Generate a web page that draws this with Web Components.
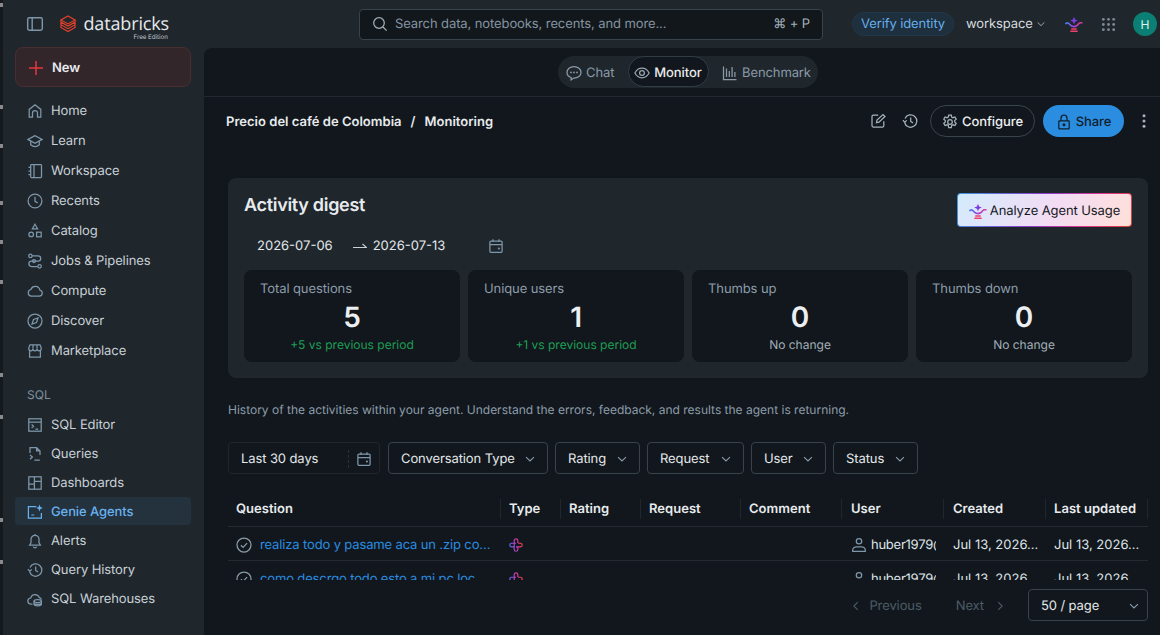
<!DOCTYPE html>
<html lang="en"><head><meta charset="utf-8"><title>Monitoring</title>
<style>
html,body{margin:0;padding:0;height:100%;overflow:hidden;background:#1f272d;font-family:Inter,"Liberation Sans",sans-serif;font-size:13px;color:#dfe4e8;text-rendering:geometricPrecision;letter-spacing:-.1px}
</style></head><body>
<app-shell>
  <top-bar slot="top"></top-bar>
  <side-nav slot="side"></side-nav>
  <main-pane slot="main">
    <seg-tabs></seg-tabs>
    <page-head></page-head>
    <digest-card></digest-card>
    <filter-bar></filter-bar>
    <data-table></data-table>
    <pager-bar></pager-bar>
  </main-pane>
</app-shell>
<script>
const P={
panel:'<rect x="1.5" y="2.5" width="13" height="11" rx="1.5"/><path d="M5.500 2.500v11"/>',
search:'<circle cx="7" cy="7" r="5.300"/><path d="M11 11l3.600 3.600"/>',
home:'<path d="M2.200 14.200V6.400L8 1.800l5.800 4.600v7.800h-3.300V10a2.500 2.500 0 0 0-5 0v4.200z"/>',
learn:'<path d="M8 2.600.9 6.400 8 10.200l7.100-3.800z"/><path d="M3.700 8.200v3.600C5 13 6.500 13.700 8 13.700s3-.7 4.300-1.900V8.200"/>',
workspace:'<rect x="3.700" y="1.500" width="10.800" height="13" rx=".8"/><path d="M7 1.500v13M1.500 4.300h2.200M1.500 8h2.200M1.500 11.700h2.200"/>',
recents:'<circle cx="8" cy="8" r="6.900"/><path d="M8 3.800v4.500l2.700 1.600"/>',
catalog:'<path d="M8 1.200l2.600 4.600H5.400z"/><circle cx="4.200" cy="11.400" r="2.300"/><rect x="9.600" y="9.200" width="4.600" height="4.600"/>',
jobs:'<circle cx="3.400" cy="2.900" r="1.700"/><path d="M5.100 2.900h6a2.600 2.600 0 0 1 0 5.200H4.600a2.700 2.700 0 0 0 0 5.400h6"/><circle cx="12.600" cy="13.300" r="1.700"/><circle cx="7" cy="8.100" r="1.500"/>',
compute:'<path d="M4.300 13.200h7.900a3.100 3.100 0 0 0 .7-6.100 4.700 4.700 0 0 0-9-.6 3.400 3.400 0 0 0 .4 6.700z"/>',
discover:'<circle cx="8" cy="8" r="7"/><path d="M11 5 9.500 9.500 5 11l1.500-4.500z"/>',
market:'<path d="M2.600 7.600v6.600h10.800V7.600"/><path d="M3 1.800h10l1.200 3v1a2.050 2.050 0 0 1-4.100 0 2.100 2.100 0 0 1-4.200 0 2.050 2.050 0 0 1-4.100 0v-1zM6 2v3.500M10 2v3.500"/>',
editor:'<rect x="1.800" y="1.800" width="12.400" height="12.400"/><path d="M1.800 5h12.400M4.600 7.600l2 1.700-2 1.700M8.400 12h2.800"/>',
queries:'<path d="M3 7V1.500h6.600L13 4.900V9M9.600 1.500v3.400H13"/><path d="M3 9l2.400 2L3 13.200M7.400 14h5.400"/>',
dash:'<rect x="1.800" y="1.800" width="12.400" height="12.400"/><path d="M7.400 1.800v12.400M1.800 9h5.600M7.400 6.400h6.800"/>',
genie:'<path d="M14.400 9v5H1.400V2.600h8"/><path fill="currentColor" stroke="none" d="M12.500.6l.9 2.500 2.500.9-2.500.9-.9 2.500-.9-2.500L9.100 4l2.500-.9zM4.300 10.400h3v1.200h-3z"/>',
alerts:'<path d="M2.600 12h10.800l-1.400-2.300V6.300a4 4 0 0 0-8 0v3.400zM6.300 13.600a1.800 1.800 0 0 0 3.400 0M8 1v1.300"/>',
history:'<path d="M2.600 9.500a6.200 6.200 0 1 0 .4-4.100M.9 7.300l1.900 1.900 2-1.800M8.700 4.600v3.900l2.300 1.400"/>',
wh:'<path d="M5.500 13H3.900a3 3 0 0 1-.1-6 4.400 4.400 0 0 1 8.500-.4 3 3 0 0 1 2.200 2"/><ellipse cx="10.700" cy="10" rx="3.700" ry="1.500"/><path d="M7 10v3.300c0 .9 1.700 1.500 3.700 1.500s3.700-.6 3.700-1.500V10M7 12c0 .8 1.700 1.400 3.700 1.400s3.700-.6 3.700-1.400"/>',
down:'<path d="M3.500 5.800 8 10.200l4.500-4.400"/>',
left:'<path d="M10 3.500 5.500 8l4.500 4.500"/>',
right:'<path d="M6 3.500 10.500 8 6 12.500"/>',
chat:'<path d="M8 1.700c3.900 0 7 2.500 7 5.700s-3.100 5.600-7 5.600h-.4l-2.500 1.900v-2.400C2.700 11.700 1 9.700 1 7.400 1 4.200 4.100 1.700 8 1.700z"/><path stroke-width="1.800" stroke-linecap="round" d="M5 7.400h0M8 7.400h0M11 7.400h0"/>',
eye:'<path d="M.9 8C2.500 4.900 5 3.200 8 3.200S13.500 4.900 15.100 8c-1.600 3.100-4.100 4.800-7.100 4.800S2.500 11.100.9 8z"/><circle cx="8" cy="8" r="2.400"/>',
chart:'<path d="M1.500 1.500v13h13M4.500 3.500v8.500M7.300 6v6M10.100 2v10M12.900 7v5"/>',
edit:'<path d="M13.800 8.200v4.600a1.200 1.200 0 0 1-1.200 1.200H3.200A1.200 1.200 0 0 1 2 12.800V3.400a1.200 1.200 0 0 1 1.200-1.200h5"/><path d="M6.500 9.700l.5-2.700 6-5.500 2 2-6 5.700z"/>',
gear:'<circle cx="8" cy="8" r="2.300"/><path d="M6.700 1h2.600l.4 2 1.300.7 1.900-.7 1.300 2.200-1.500 1.300v1.500l1.500 1.300-1.300 2.200-1.900-.7-1.300.7-.4 2H6.700l-.4-2-1.300-.7-1.900.7-1.300-2.200 1.500-1.300V6.500L1.800 5.200l1.300-2.200 1.900.7 1.300-.7z"/>',
lock:'<rect x="2.800" y="6.800" width="10.400" height="8" rx=".6"/><path d="M5 6.800V4.200a3 3 0 0 1 6 0v2.600"/><circle cx="8" cy="10.800" r=".9" fill="currentColor"/>',
cal:'<rect x="1.900" y="3" width="12.200" height="11.300" rx="1"/><path d="M1.900 6.600h12.200M5 1.200V4M11 1.200V4"/><circle cx="10.900" cy="10.500" r="1.100" fill="currentColor" stroke="none"/>',
check:'<circle cx="8" cy="8" r="7"/><path d="M4.900 8.300l2.200 2.100 4-4.300"/>',
user:'<circle cx="8" cy="4.200" r="2.700"/><path d="M1.700 14.300v-1.100c0-2 1.800-3.400 3.800-3.400h5c2 0 3.800 1.400 3.800 3.400v1.100z"/>',
grid:'<g fill="currentColor" stroke="none"><circle cx="2.500" cy="2.500" r="1.500"/><circle cx="8" cy="2.500" r="1.500"/><circle cx="13.500" cy="2.500" r="1.500"/><circle cx="2.500" cy="8" r="1.500"/><circle cx="8" cy="8" r="1.500"/><circle cx="13.500" cy="8" r="1.500"/><circle cx="2.500" cy="13.500" r="1.500"/><circle cx="8" cy="13.500" r="1.500"/><circle cx="13.500" cy="13.500" r="1.500"/></g>',
dots:'<g fill="currentColor" stroke="none"><circle cx="8" cy="2.800" r="1.500"/><circle cx="8" cy="8" r="1.500"/><circle cx="8" cy="13.200" r="1.500"/></g>',
plus:'<path stroke-width="1.500" d="M8 1v14M1 8h14"/>'
};
class XIcon extends HTMLElement{connectedCallback(){
 const s=this.getAttribute('size')||16,n=this.getAttribute('name');
 this.attachShadow({mode:'open'}).innerHTML=`<style>:host{display:inline-flex;flex:none;width:${s}px;height:${s}px;color:var(--icon,#7e97ab)}svg{display:block;width:100%;height:100%;fill:none;stroke:currentColor;stroke-width:1.250}</style><svg viewBox="0 0 16 16">${P[n]||''}</svg>`;
}}
customElements.define('x-icon',XIcon);

let gid=0;
class GenieLamp extends HTMLElement{connectedCallback(){
 const id='g'+(++gid),s=this.getAttribute('size')||20;
 this.attachShadow({mode:'open'}).innerHTML=`<style>:host{display:inline-flex;flex:none;width:${s}px;height:${s}px}svg{width:100%;height:100%;display:block}</style>
 <svg viewBox="0 0 20 20"><defs><linearGradient id="${id}" x1="0" y1="0" x2="1" y2="0"><stop offset="0" stop-color="#3f7ff0"/><stop offset=".5" stop-color="#a83ee0"/><stop offset="1" stop-color="#e0389a"/></linearGradient></defs>
 <path fill="#7d3ce6" d="M10 2l1.200 3 3 1.200-3 1.200-1.200 3-1.200-3-3-1.200 3-1.200z"/>
 <path fill="none" stroke="url(#${id})" stroke-width="1.800" stroke-linecap="round" d="M1 9.500c1.600-1.500 3-.5 4 .8s1.700 2.600 4.800 2.600c3.300 0 4.700-2 5.700-3.600.5-.7 1.700-.9 3.200-.6"/>
 <path fill="none" stroke="#f0406a" stroke-width="1.600" stroke-linecap="round" d="M7.500 15.500h5M6.500 18h7"/></svg>`;
}}
customElements.define('genie-lamp',GenieLamp);

class KnotIcon extends HTMLElement{connectedCallback(){
 const id='k'+(++gid);
 this.attachShadow({mode:'open'}).innerHTML=`<style>:host{display:inline-flex;flex:none;width:14px;height:14px}svg{width:100%;height:100%;display:block}</style>
 <svg viewBox="0 0 14 14" fill="none" stroke-width="1.150"><defs><linearGradient id="${id}" gradientUnits="userSpaceOnUse" x1="1" y1="8" x2="13" y2="6"><stop offset="0" stop-color="#5a6cf0"/><stop offset=".5" stop-color="#c83ac0"/><stop offset="1" stop-color="#f04048"/></linearGradient></defs>
 <path stroke="url(#${id})" d="M5.200 7V2.600a1.800 1.800 0 0 1 3.600 0V5M9 5.200h2.400a1.800 1.800 0 0 1 0 3.600H7M8.800 9v2.400a1.800 1.800 0 0 1-3.600 0V7M5 8.800H2.600a1.800 1.800 0 0 1 0-3.600H7"/></svg>`;
}}
customElements.define('knot-icon',KnotIcon);

class DbLogo extends HTMLElement{connectedCallback(){
 this.attachShadow({mode:'open'}).innerHTML=`<style>:host{display:inline-flex;flex:none;width:16px;height:18px}svg{width:100%;height:100%;display:block}</style>
 <svg viewBox="0 0 17 19" fill="none" stroke="#e5402a" stroke-width="1.200"><path d="M8.500 1 16 5.200 8.500 9.400 1 5.200z"/><path d="M1 5.200v2.300l7.500 4.200L16 7.500V5.200M1 7.500v2.800l7.500 4.200 7.500-4.200V7.500M1 10.300v2.900l7.500 4.300 7.500-4.300v-2.900"/></svg>`;
}}
customElements.define('db-logo',DbLogo);

class AppShell extends HTMLElement{constructor(){super();
 this.attachShadow({mode:'open'}).innerHTML=`<style>
 :host{display:grid;grid-template-columns:3px 201px 1fr;grid-template-rows:48px 587px;height:635px;width:1160px;background:#1f272d}
 .edge{grid-row:1/3;background:linear-gradient(#14191d 0 3px,#8a8a8a 3px 7px,#14191d 7px 105px,#8a8a8a 105px 109px,#14191d 109px 144px,#8a8a8a 144px 148px,#14191d 148px 201px,#8a8a8a 201px 205px,#14191d 205px 240px,#8a8a8a 240px 244px,#14191d 244px 280px,#8a8a8a 280px 284px,#14191d 284px 373px,#8a8a8a 373px 377px,#14191d 377px 415px,#8a8a8a 415px 419px,#14191d 419px 518px,#8a8a8a 518px 522px,#14191d 522px 560px,#8a8a8a 560px 564px,#14191d 564px)}
 .t{grid-column:2/4;min-width:0} .s{min-height:0} .m{min-width:0;min-height:0}
 </style><div class="edge"></div><div class="t"><slot name="top"></slot></div><div class="s"><slot name="side"></slot></div><div class="m"><slot name="main"></slot></div>`;
}}
customElements.define('app-shell',AppShell);

class TopBar extends HTMLElement{constructor(){super();
 this.attachShadow({mode:'open'}).innerHTML=`<style>
 :host{display:flex;align-items:center;height:48px;box-sizing:border-box;padding-left:23px}
 :host>*{flex:none}
 .logo{display:flex;align-items:flex-start;margin-left:16px;width:110px;height:30px;gap:7px;box-sizing:border-box;padding-top:6px}
 .word{display:flex;flex-direction:column;align-items:flex-end;line-height:1;width:86px}
 .db{font:500 18px/19px "Open Sans",Inter,sans-serif;color:#e6e9ec;letter-spacing:-.15px}
 .fe{font-size:6.200px;line-height:8px;color:#c3cad0;margin-right:1px;letter-spacing:0}
 .search{display:flex;flex:none;align-items:center;gap:7px;box-sizing:border-box;margin-left:189px;width:464px;height:31px;padding:0 12px;border:1px solid #39434c;border-radius:4px;background:#12171c;color:#8494a1}
 .search span{flex:1}
 .kbd{flex:none!important;color:#a4afb8}
 .verify{box-sizing:border-box;margin-left:29px;height:24px;width:102px;border-radius:12px;background:#1e2f3e;border:1px solid #243746;color:#67aeea;display:flex;align-items:center;justify-content:center}
 .ws{margin-left:12px;color:#d5dadf;display:flex;align-items:center;gap:2px}
 .lamp{margin-left:18px}
 .grid{margin-left:18px;--icon:#7b8995}
 .av{margin-left:17px;width:24px;height:24px;border-radius:50%;background:#0b7f73;color:#dff3ef;display:flex;align-items:center;justify-content:center;font-size:12px}
 </style>
 <x-icon name="panel" size="18"></x-icon>
 <div class="logo"><db-logo></db-logo><div class="word"><span class="db">databricks</span><span class="fe">Free Edition</span></div></div>
 <div class="search"><x-icon name="search" size="16" style="--icon:#a4afb8"></x-icon><span>Search data, notebooks, recents, and more...</span><span class="kbd">⌘ + P</span></div>
 <div class="verify">Verify identity</div>
 <div class="ws">workspace <x-icon name="down" size="12" style="--icon:#a4afb8"></x-icon></div>
 <genie-lamp class="lamp" size="18"></genie-lamp>
 <x-icon class="grid" name="grid" size="15"></x-icon>
 <div class="av">H</div>`;
}}
customElements.define('top-bar',TopBar);

class NavItem extends HTMLElement{constructor(){super();
 this.attachShadow({mode:'open'}).innerHTML=`<style>
 :host{display:flex;align-items:center;gap:8px;height:28px;box-sizing:border-box;padding:2px 0 0 12px;border-radius:4px;color:#c9d0d6;font-size:13px;white-space:nowrap}
 :host([active]){background:#24323e;color:#68b1ee;font-weight:500;--icon:#68b1ee}
 </style><slot name="i"></slot><slot></slot>`;
}}
customElements.define('nav-item',NavItem);

class SideNav extends HTMLElement{constructor(){super();
 const a=[['home','Home'],['learn','Learn'],['workspace','Workspace'],['recents','Recents'],['catalog','Catalog'],['jobs','Jobs & Pipelines'],['compute','Compute'],['discover','Discover'],['market','Marketplace']];
 const b=[['editor','SQL Editor'],['queries','Queries'],['dash','Dashboards'],['genie','Genie Agents',1],['alerts','Alerts'],['history','Query History'],['wh','SQL Warehouses']];
 const r=x=>x.map(([i,t,on])=>`<nav-item ${on?'active':''}><x-icon slot="i" name="${i}"></x-icon>${t.replace('&','&amp;')}</nav-item>`).join('');
 this.attachShadow({mode:'open'}).innerHTML=`<style>
 :host{display:block;box-sizing:border-box;width:176px;margin-left:12px}
 .new{box-sizing:border-box;margin-top:-1px;height:40px;background:#33262a;border:1px solid #482e31;border-radius:8px;display:flex;align-items:center;gap:8px;padding:2px 0 0 12px;font-weight:600;color:#e8ebed}
 .g1{display:flex;flex-direction:column;gap:2px;margin-top:9px}
 .lab{height:18px;line-height:18px;margin:22px 0 6px 12px;font-size:12px;color:#7e8f9d;letter-spacing:0}
 .g2{display:flex;flex-direction:column;gap:1px}
 </style>
 <div class="new"><x-icon name="plus" size="16" style="--icon:#e5383e"></x-icon>New</div>
 <div class="g1">${r(a)}</div><div class="lab">SQL</div><div class="g2">${r(b)}</div>`;
}}
customElements.define('side-nav',SideNav);

class MainPane extends HTMLElement{constructor(){super();
 this.attachShadow({mode:'open'}).innerHTML=`<style>:host{display:flex;flex-direction:column;height:587px;background:#11171c;border-top-left-radius:8px;overflow:hidden;box-sizing:border-box}</style><slot></slot>`;
}}
customElements.define('main-pane',MainPane);

class SegTabs extends HTMLElement{constructor(){super();
 this.attachShadow({mode:'open'}).innerHTML=`<style>
 :host{display:flex;justify-content:center;align-items:center;height:49px;box-sizing:border-box;border-bottom:1px solid #202930;padding-left:12px;padding-bottom:1px;flex:none}
 .pill{display:flex;align-items:center;height:32px;box-sizing:border-box;width:260px;background:#1f272d;border-radius:16px;padding-left:8px;color:#8b9aa7}
 .t{display:flex;align-items:center;gap:4px;padding-top:2px}
 .chat{width:62px}
 .mon{box-sizing:border-box;width:81px;height:31px;margin-right:13px;justify-content:center;background:#11171c;border:1px solid #323c45;border-radius:16px;color:#e8ebed;font-weight:500;padding:2px 1px 0 0}
 </style><div class="pill"><div class="t chat"><x-icon name="chat" style="--icon:#8b9aa7"></x-icon>Chat</div><div class="t mon"><x-icon name="eye" style="--icon:#9aa7b2"></x-icon>Monitor</div><div class="t"><x-icon name="chart" style="--icon:#8b9aa7"></x-icon>Benchmark</div></div>`;
}}
customElements.define('seg-tabs',SegTabs);

class PageHead extends HTMLElement{constructor(){super();
 this.attachShadow({mode:'open'}).innerHTML=`<style>
 :host{display:flex;align-items:center;height:48px;box-sizing:border-box;padding:0 8px 0 22px;--icon:#a6b1ba;flex:none}
 .crumb{flex:1;font-weight:600;color:#e8ebed;display:flex;gap:9px;font-size:13px;padding-top:2px;letter-spacing:.02px}
 .cfg{box-sizing:border-box;margin-left:12px;height:32px;width:105px;border:1px solid #3a444d;border-radius:16px;display:flex;align-items:center;justify-content:center;gap:4px;font-weight:500;color:#eef0f2;padding-top:2px}
 .share{box-sizing:border-box;margin-left:8px;height:32px;width:81px;border-radius:16px;background:#2a8de0;display:flex;align-items:center;justify-content:center;gap:4px;color:#10202e;font-weight:500;--icon:#10202e;padding-top:2px}
 .ic{margin-left:16px}
 .dots{margin-left:12px}
 </style><div class="crumb"><span>Precio del café de Colombia</span><span>/</span><span>Monitoring</span></div>
 <x-icon class="ic" name="edit"></x-icon><x-icon class="ic" name="history"></x-icon>
 <div class="cfg"><x-icon name="gear"></x-icon>Configure</div>
 <div class="share"><x-icon name="lock"></x-icon>Share</div>
 <x-icon class="dots" name="dots"></x-icon>`;
}}
customElements.define('page-head',PageHead);

class StatCard extends HTMLElement{constructor(){super();
 const g=this.getAttribute('delta').startsWith('+');
 this.attachShadow({mode:'open'}).innerHTML=`<style>
 :host{display:flex;flex-direction:column;height:92px;box-sizing:border-box;background:#11171c;border-radius:8px;padding:11px 16px 0;min-width:0}
 .l{line-height:16px;color:#8d9caa;font-size:13px}
 .v{height:34px;line-height:34px;margin-top:3px;text-align:center;font-size:28px;font-weight:600;color:#eceff1}
 .d{margin-top:3px;line-height:16px;text-align:center;font-size:12px;letter-spacing:0;color:${g?'#1f9d55':'#a3afb9'}}
 </style><div class="l">${this.getAttribute('label')}</div><div class="v">${this.getAttribute('value')}</div><div class="d">${this.getAttribute('delta')}</div>`;
}}
customElements.define('stat-card',StatCard);

class DigestCard extends HTMLElement{constructor(){super();
 this.attachShadow({mode:'open'}).innerHTML=`<style>
 :host{display:block;flex:none;box-sizing:border-box;margin:33px 12px 0 24px;width:920px;height:200px;background:#1f272d;border-radius:8px;padding:15px 16px 0}
 .top{display:flex;justify-content:space-between;align-items:flex-start;height:34px}
 h2{margin:1px 0 0;font-size:18px;line-height:24px;font-weight:600;color:#e8ebed;letter-spacing:-.3px}
 .ai{box-sizing:border-box;width:175px;height:34px;border:1px solid transparent;border-radius:4px;display:flex;align-items:center;justify-content:center;gap:3px;padding-top:2px;color:#14191e;
  background:linear-gradient(120deg,#d3ebfc 0%,#f3dcf4 55%,#ffe0d8 100%) padding-box,linear-gradient(120deg,#3f9ae0,#8a3fd0 45%,#e0358f 75%,#d84030) border-box}
 .date{display:flex;align-items:center;height:36px;margin-top:1px;padding-left:13px;color:#e4e8eb;letter-spacing:0}
 .sep{width:14px;height:8px;margin:0 6px 0 20px;display:block}
 .cal{margin-left:43px}
 .grid{display:grid;grid-template-columns:repeat(4,216px);gap:8px;margin-top:6px}
 </style>
 <div class="top"><h2>Activity digest</h2><div class="ai"><genie-lamp size="18"></genie-lamp>Analyze Agent Usage</div></div>
 <div class="date"><span>2026-07-06</span><svg class="sep" viewBox="0 0 14 8" fill="none" stroke="#c8d0d6" stroke-width="1.100"><path d="M0 5.500h13.500L9.500 2"/></svg><span>2026-07-13</span><x-icon class="cal" name="cal"></x-icon></div>
 <div class="grid">
  <stat-card label="Total questions" value="5" delta="+5 vs previous period"></stat-card>
  <stat-card label="Unique users" value="1" delta="+1 vs previous period"></stat-card>
  <stat-card label="Thumbs up" value="0" delta="No change"></stat-card>
  <stat-card label="Thumbs down" value="0" delta="No change"></stat-card>
 </div>`;
}}
customElements.define('digest-card',DigestCard);

class FilterBar extends HTMLElement{constructor(){super();
 const f=[['Conversation Type',160],['Rating',85],['Request',97],['User',75],['Status',85]];
 this.attachShadow({mode:'open'}).innerHTML=`<style>
 :host{display:block;flex:none;margin:0 12px 0 24px}
 p{margin:24px 0 0;line-height:16px;font-size:12px;color:#8d9caa;letter-spacing:0}
 .row{display:flex;gap:7px;margin-top:24px}
 .rng{box-sizing:border-box;width:152px;height:32px;margin-right:1px;border:1px solid #1f272d;border-radius:4px;display:flex;align-items:center;padding:2px 0 0 12px;color:#e4e8eb}
 .rng span{width:107px}
 .rng i{display:block;height:18px;border-left:1px dashed #27313a;margin-right:7px}
 .f{box-sizing:border-box;height:32px;border:1px solid #38434c;border-radius:4px;display:flex;align-items:center;justify-content:space-between;padding:2px 10px 0 12px;color:#e4e8eb}
 </style><p>History of the activities within your agent. Understand the errors, feedback, and results the agent is returning.</p>
 <div class="row"><div class="rng"><span>Last 30 days</span><i></i><x-icon name="cal"></x-icon></div>
 ${f.map(([t,w])=>`<div class="f" style="width:${w}px">${t}<x-icon name="down" size="14" style="--icon:#8d9caa"></x-icon></div>`).join('')}</div>`;
}}
customElements.define('filter-bar',FilterBar);

class DataTable extends HTMLElement{constructor(){super();
 const cols=['Question','Type','Rating','Request','Comment','User','Created','Last updated'];
 const row=q=>`<div class="c q"><x-icon name="check"></x-icon><a>${q}</a></div><div class="c"><knot-icon></knot-icon></div><div class="c"></div><div class="c"></div><div class="c"></div><div class="c u"><x-icon name="user"></x-icon><span class="clip">huber1979@gmail.com</span></div><div class="c l"><span class="el">Jul 13, 2026, 10:24 AM</span></div><div class="c"><span class="el">Jul 13, 2026, 10:24 AM</span></div>`;
 this.attachShadow({mode:'open'}).innerHTML=`<style>
 :host{display:block;flex:none;margin:16px 12px 0 24px;height:90px;overflow:hidden}
 .t{display:grid;grid-template-columns:273px 60px 80px 100px 101px 102px 102px 102px;grid-auto-rows:34px;grid-template-rows:37px 34px 34px}
 .h{display:flex;align-items:center;padding:2px 8px 0;font-weight:600;color:#e8ebed;border-bottom:1px solid #222b32;white-space:nowrap;letter-spacing:.03px}
 .h:nth-child(6),.h:nth-child(7){padding-left:9px}
 .h span{flex:1}
 .h i{display:block;height:20px;width:1px;background:#1f272d;margin-right:-8px}
 .c{display:flex;align-items:center;padding:2px 8px 0;border-bottom:1px solid #222b32;min-width:0;color:#dfe4e8;white-space:nowrap;letter-spacing:0}
 .q{gap:8px;--icon:#8d9caa}
 .q a{color:#2a8de0;overflow:hidden;text-overflow:ellipsis;width:231px;flex:none;letter-spacing:-.14px}
 .u{gap:4px;padding-left:9px}
 .l{padding:2px 5px 0 9px}
 .clip{overflow:hidden;flex:1;min-width:0;letter-spacing:-.25px}
 .el{overflow:hidden;text-overflow:ellipsis;min-width:0}
 </style><div class="t">${cols.map(c=>`<div class="h"><span>${c}</span><i></i></div>`).join('')}${row('realiza todo y pasame aca un .zip con todos los archivos')}${row('como descrgo todo esto a mi pc local para trabajar')}</div>`;
}}
customElements.define('data-table',DataTable);

class PagerBar extends HTMLElement{constructor(){super();
 this.attachShadow({mode:'open'}).innerHTML=`<style>
 :host{display:flex;flex:none;align-items:center;justify-content:flex-end;margin:9px 12px 0 0;height:32px;color:#4d5b67;--icon:#4d5b67}
 .b{display:flex;align-items:center;gap:6px;padding-top:2px}
 .n{margin-left:34px;gap:9px}
 .sel{box-sizing:border-box;margin-left:21px;width:120px;height:32px;border:1px solid #38434c;border-radius:4px;display:flex;align-items:center;justify-content:space-between;padding:2px 6px 0 12px;color:#e4e8eb;--icon:#8d9caa}
 </style><div class="b"><x-icon name="left" size="14"></x-icon>Previous</div><div class="b n">Next<x-icon name="right" size="14"></x-icon></div>
 <div class="sel">50 / page<x-icon name="down" size="14"></x-icon></div>`;
}}
customElements.define('pager-bar',PagerBar);
</script>
</body></html>
